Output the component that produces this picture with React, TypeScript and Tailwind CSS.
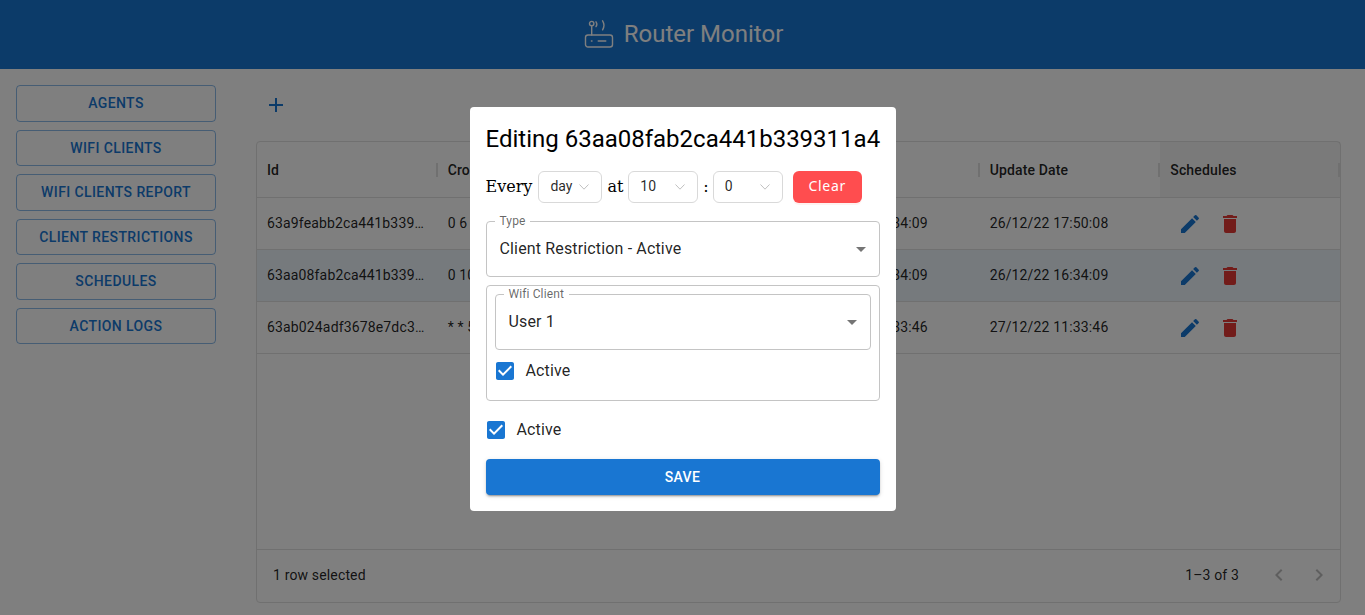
import type { ReactNode } from "react";

const navItems = ["Agents", "Wifi Clients", "Wifi Clients Report", "Client Restrictions", "Schedules", "Action Logs"];
const columns = ["Id", "Cron Expression", "Type", "Create Date", "Update Date", "Schedules"];
const rows = [
  { id: "63a9feabb2ca441b339311a3", cron: "0 6 * * *", type: "Client Restriction", created: "26/12/22 16:34:09", updated: "26/12/22 17:50:08", selected: false },
  { id: "63aa08fab2ca441b339311a4", cron: "0 10 * * *", type: "Client Restriction", created: "26/12/22 16:34:09", updated: "26/12/22 16:34:09", selected: true },
  { id: "63ab024adf3678e7dc3a51b2", cron: "* * 5 * *", type: "Client Restriction", created: "27/12/22 11:33:46", updated: "27/12/22 11:33:46", selected: false },
];

function MuiIcon({ d, className }: { d: string; className: string }) {
  return (
    <svg viewBox="0 0 24 24" className={`h-6 w-6 fill-current ${className}`}>
      <path d={d} />
    </svg>
  );
}

const checkboxPath =
  "M19 3H5c-1.11 0-2 .9-2 2v14c0 1.1.89 2 2 2h14c1.11 0 2-.9 2-2V5c0-1.1-.89-2-2-2zm-9 14l-5-5 1.41-1.41L10 14.17l7.59-7.59L19 8l-9 9z";

function RouterLogo() {
  return (
    <svg viewBox="0 0 30 28" className="-mt-[2px] h-7 w-[30px] fill-none stroke-white" strokeWidth="1.4" strokeLinecap="round">
      <rect x="1.5" y="15" width="27" height="12" rx="2.5" />
      <circle cx="7.7" cy="3.6" r="2.2" />
      <path d="M7.7 5.8V15" />
      <path d="M12 1.8c1 1.4 1 3.4 0 4.8" />
      <path d="M18.6 0.8c1.6 2.6 1.6 6.4 0 9" />
      <path d="M7.4 21h.6M14.2 21h7.6" />
    </svg>
  );
}

function OutlinedSelect({ label, value }: { label: string; value: string }) {
  return (
    <div className="relative flex h-14 items-center justify-between rounded border border-[#c4c4c4] pl-[13px] pr-[6px]">
      <span className="absolute -top-[8px] left-[8px] bg-white px-[5px] text-xs leading-[14px] tracking-[.00938em] text-black/60">{label}</span>
      <span className="text-base tracking-[.00938em] text-black/[.87]">{value}</span>
      <MuiIcon d="M7 10l5 5 5-5z" className="text-black/[.54]" />
    </div>
  );
}

function CheckRow({ className = "" }: { className?: string }) {
  return (
    <label className={`-ml-[11px] flex h-[42px] items-center ${className}`}>
      <span className="p-[9px]">
        <MuiIcon d={checkboxPath} className="text-[#1976d2]" />
      </span>
      <span className="text-base tracking-[.00938em] text-black/[.87]">Active</span>
    </label>
  );
}

function CronSelect({ value, width }: { value: string; width: string }) {
  return (
    <div className={`flex h-8 items-center justify-between rounded-md border border-[#d9d9d9] bg-white pb-[2px] pl-[11px] pr-3 text-sm text-black/[.85] ${width}`}>
      <span>{value}</span>
      <svg viewBox="0 0 10 6" className="mt-[2px] h-[6px] w-[10px] fill-none stroke-black/25">
        <path d="M.5.5 5 5.2 9.5.5" />
      </svg>
    </div>
  );
}

function HeaderCell({ children, shaded }: { children: ReactNode; shaded?: boolean }) {
  return (
    <div className={`relative flex items-center px-[10px] text-sm font-medium tracking-[.01071em] text-black/[.87] ${shaded ? "bg-black/[.04]" : ""}`}>
      {children}
      <span className="absolute right-0 top-[21px] h-[14px] w-[2px] bg-[#e0e0e0]" />
    </div>
  );
}

export default function App() {
  return (
    <div className="flex h-screen flex-col overflow-hidden bg-white font-['Roboto',sans-serif]">
      <header className="flex h-[69px] shrink-0 items-center justify-center gap-[10px] bg-[#1976d2] pl-[2px]">
        <RouterLogo />
        <h1 className="-mt-[2px] text-2xl text-white">Router Monitor</h1>
      </header>

      <div className="flex min-h-0 flex-1">
        <nav className="flex w-[256px] shrink-0 flex-col gap-2 pl-4 pr-10 pt-4">
          {navItems.map((item) => (
            <button
              key={item}
              className="inline-flex items-center justify-center rounded border border-[#1976d2]/50 py-[5px] text-sm font-medium uppercase leading-[1.75] tracking-[.02857em] text-[#1976d2]"
            >
              {item}
            </button>
          ))}
        </nav>

        <main className="flex min-w-0 flex-1 flex-col pb-3 pr-6 pt-4">
          <button className="flex h-10 w-10 items-center justify-center">
            <MuiIcon d="M19 13h-6v6h-2v-6H5v-2h6V5h2v6h6v2z" className="text-[#1976d2]" />
          </button>

          <div className="mt-4 flex min-h-0 flex-1 flex-col rounded border border-[#e0e0e0]">
            <div className="grid h-[56px] shrink-0 grid-cols-[180.67px_180.67px_180.67px_180.67px_180.67px_1fr] border-b border-[#e0e0e0]">
              {columns.map((col) => (
                <HeaderCell key={col} shaded={col === "Schedules"}>
                  {col}
                </HeaderCell>
              ))}
            </div>

            <div className="flex-1">
              {rows.map((row) => (
                <div
                  key={row.id}
                  className={`grid h-[52px] grid-cols-[180.67px_180.67px_180.67px_180.67px_180.67px_1fr] items-center border-b border-[#e0e0e0] text-sm tracking-[.01071em] text-black/[.87] ${row.selected ? "bg-[#1976d2]/[.08]" : ""}`}
                >
                  <div className="-mt-[1px] truncate px-[10px]">{row.id}</div>
                  <div className="-mt-[1px] truncate px-[10px]">{row.cron}</div>
                  <div className="-mt-[1px] truncate px-[10px]">{row.type}</div>
                  <div className="-mt-[1px] truncate px-[10px]">{row.created}</div>
                  <div className="-mt-[1px] truncate px-[10px]">{row.updated}</div>
                  <div className="flex px-[10px]">
                    <button className="flex h-10 w-10 items-center justify-center">
                      <MuiIcon
                        d="M3 17.25V21h3.75L17.81 9.94l-3.75-3.75L3 17.25zM20.71 7.04c.39-.39.39-1.02 0-1.41l-2.34-2.34a.9959.9959 0 0 0-1.41 0l-1.83 1.83 3.75 3.75 1.83-1.83z"
                        className="text-[#1976d2]"
                      />
                    </button>
                    <button className="flex h-10 w-10 items-center justify-center">
                      <MuiIcon
                        d="M6 19c0 1.1.9 2 2 2h8c1.1 0 2-.9 2-2V7H6v12zM19 4h-3.5l-1-1h-5l-1 1H5v2h14V4z"
                        className="text-[#e53935]"
                      />
                    </button>
                  </div>
                </div>
              ))}
            </div>

            <div className="flex h-[53px] shrink-0 items-center justify-between border-t border-[#e0e0e0] pb-[2px] pl-4 text-sm tracking-[.01071em] text-black/[.87]">
              <span>1 row selected</span>
              <div className="flex items-center pr-[1px]">
                <span className="mr-5">1–3 of 3</span>
                <button className="flex h-10 w-10 items-center justify-center">
                  <MuiIcon d="M15.41 7.41 14 6l-6 6 6 6 1.41-1.41L10.83 12z" className="text-black/[.26]" />
                </button>
                <button className="flex h-10 w-10 items-center justify-center">
                  <MuiIcon d="M10 6 8.59 7.41 13.17 12l-4.58 4.59L10 18l6-6z" className="text-black/[.26]" />
                </button>
              </div>
            </div>
          </div>
        </main>
      </div>

      {/* Edit modal */}
      <div className="fixed inset-0 flex items-start justify-center bg-black/50 pt-[107px]">
        <div className="w-[426px] rounded bg-white p-4">
          <h2 className="whitespace-nowrap text-2xl leading-8 text-black">Editing 63aa08fab2ca441b339311a4</h2>

          <div className="mt-4 flex h-8 items-center font-['DejaVu_Serif',serif] text-base text-black">
            <span>Every</span>
            <div className="ml-[6px] font-['Roboto',sans-serif]">
              <CronSelect value="day" width="w-16" />
            </div>
            <span className="ml-[5px]">at</span>
            <div className="ml-[5px] font-['Roboto',sans-serif]">
              <CronSelect value="10" width="w-[70px]" />
            </div>
            <span className="ml-[5px] mr-[4px]">:</span>
            <div className="font-['Roboto',sans-serif]">
              <CronSelect value="0" width="w-[70px]" />
            </div>
            <button className="ml-[10px] h-8 w-[69px] rounded-md bg-[#ff4d4f] pb-[2px] font-['Noto_Sans',sans-serif] text-sm tracking-[.05em] text-white shadow-[0_2px_0_rgba(255,38,5,.06)]">
              Clear
            </button>
          </div>

          <div className="mt-[18px]">
            <OutlinedSelect label="Type" value="Client Restriction - Active" />
          </div>

          <div className="mt-2 rounded border border-[#c4c4c4] px-2 pb-2 pt-2">
            <OutlinedSelect label="Wifi Client" value="User 1" />
            <CheckRow />
          </div>

          <CheckRow className="mt-2" />

          <button className="mt-2 h-9 w-full rounded bg-[#1976d2] text-sm font-medium uppercase tracking-[.02857em] text-white shadow-[0_3px_1px_-2px_rgba(0,0,0,.2),0_2px_2px_0_rgba(0,0,0,.14),0_1px_5px_0_rgba(0,0,0,.12)]">
            Save
          </button>
        </div>
      </div>
    </div>
  );
}
